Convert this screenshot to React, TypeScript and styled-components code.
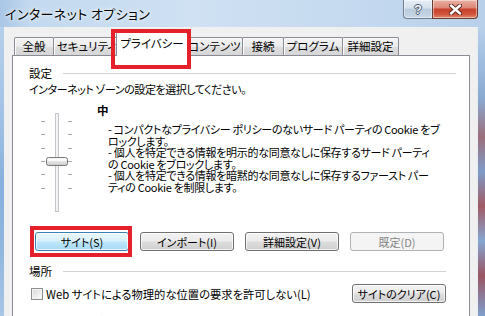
import React from "react";
import styled, { createGlobalStyle } from "styled-components";

const Global = createGlobalStyle`
  html, body { margin: 0; padding: 0; background: #ffffff; }
  body { font-family: "Noto Sans CJK JP", "Noto Sans", sans-serif; }
  #root { width: 485px; height: 316px; }
`;

const RED = "#e4202a";

const Window = styled.div`
  width: 485px;
  height: 316px;
  overflow: hidden;
  display: flex;
  flex-direction: column;
  font-family: "Noto Sans CJK JP", "Noto Sans", sans-serif;
  font-feature-settings: "palt" 1;
  font-size: 11px;
  color: #000;
`;

const TitleBar = styled.div`
  height: 27px;
  flex: none;
  display: flex;
  justify-content: space-between;
  align-items: flex-start;
  background: linear-gradient(90deg, #a9c6e6 0%, #c3d9ef 6%, #cfe1f3 40%, #c4d9ef 75%, #b8d0ea 100%);
`;

const Title = styled.div`
  padding: 5px 0 0 5px;
  font-size: 13px;
  line-height: 17px;
  letter-spacing: 0.4px;
  text-shadow: 0 0 5px rgba(255, 255, 255, 0.95), 0 0 2px rgba(255, 255, 255, 0.9);
`;

const CaptionButtons = styled.div`
  display: flex;
  margin-right: 7px;
`;

const CaptionButton = styled.div<{ $kind: "help" | "close" }>`
  box-sizing: border-box;
  height: 19px;
  width: ${(p) => (p.$kind === "help" ? 29 : 46)}px;
  display: flex;
  align-items: center;
  justify-content: center;
  border: 1px solid ${(p) => (p.$kind === "help" ? "#6f7f91" : "#6a3a34")};
  border-top: none;
  ${(p) => (p.$kind === "help" ? "border-right: none;" : "")}
  border-radius: ${(p) => (p.$kind === "help" ? "0 0 0 4px" : "0 0 4px 0")};
  background: ${(p) =>
    p.$kind === "help"
      ? "linear-gradient(180deg, #e6eef6 0%, #d5e1ec 45%, #b9cbdd 52%, #c9d8e7 100%)"
      : "linear-gradient(180deg, #eab1a5 0%, #de8a78 42%, #c8412c 52%, #cf533a 78%, #e08a6c 100%)"};
  box-shadow: inset 0 0 0 1px rgba(255, 255, 255, 0.45);
`;

const HelpGlyph = styled.span`
  font-family: "Liberation Sans", Arial, sans-serif;
  font-weight: bold;
  font-size: 13px;
  line-height: 13px;
  color: #eef3f8;
  text-shadow: 1px 0 0 #4b5a6a, -1px 0 0 #4b5a6a, 0 1px 0 #4b5a6a, 0 -1px 0 #4b5a6a;
`;

const Body = styled.div`
  flex: 1;
  min-height: 0;
  display: flex;
`;

const SideFrame = styled.div<{ $w: number; $right?: boolean }>`
  flex: none;
  width: ${(p) => p.$w}px;
  background: ${(p) =>
    p.$right
      ? "linear-gradient(180deg, #b9d0ea 0%, #9fbde0 12%, #8aa9d0 25%, #9c6f7c 38%, #7f9cc8 50%, #a15a64 62%, #86a6d1 74%, #9a5563 86%, #7f9fcc 100%)"
      : "linear-gradient(180deg, #b6cfea 0%, #a2c2e6 30%, #86b0dd 55%, #93b8e0 80%, #a9c6e6 100%)"};
  ${(p) => (p.$right ? "border-left: 1px solid #e8edf2;" : "")}
  box-sizing: border-box;
`;

const Client = styled.div`
  flex: 1;
  min-width: 0;
  background: #f0f0f0;
  padding-top: 5px;
  display: flex;
  flex-direction: column;
`;

const TabStrip = styled.div`
  position: relative;
  z-index: 2;
  display: flex;
  align-items: flex-end;
  height: 24px;
  margin: 0 0 -1px 10px;
`;

const Tab = styled.div<{ $w: number; $ml?: number; $selected?: boolean }>`
  position: relative;
  box-sizing: border-box;
  width: ${(p) => p.$w}px;
  margin-left: ${(p) => p.$ml ?? 0}px;
  height: ${(p) => (p.$selected ? 24 : 18)}px;
  margin-bottom: ${(p) => (p.$selected ? 0 : 1)}px;
  border: 1px solid #898c95;
  border-bottom: none;
  border-radius: 2px 2px 0 0;
  background: ${(p) =>
    p.$selected ? "#ffffff" : "linear-gradient(180deg, #f3f3f3 0%, #ebebeb 50%, #dedede 51%, #d6d6d6 100%)"};
  box-shadow: ${(p) => (p.$selected ? "none" : "inset 1px 1px 0 #fbfbfb")};
  z-index: ${(p) => (p.$selected ? 1 : 0)};
  overflow: hidden;
  white-space: nowrap;
  text-align: center;
  font-size: 11.5px;
  line-height: ${(p) => (p.$selected ? 20 : 17)}px;
  ${(p) =>
    p.$selected
      ? `overflow: visible;
  &::after {
    content: "";
    position: absolute;
    left: -6px;
    right: -4px;
    top: -4px;
    bottom: -13px;
    border: 4px solid ${RED};
    pointer-events: none;
  }`
      : ""}
`;

const Panel = styled.div`
  flex: 1;
  min-height: 0;
  width: 458px;
  box-sizing: border-box;
  margin-left: 8px;
  border: 1px solid #898c95;
  border-bottom: none;
  background: #ffffff;
  padding: 10px 13px 0 16px;
  display: flex;
  flex-direction: column;
  overflow: hidden;
`;

const GroupHeader = styled.div<{ $mt?: number; $mr?: number }>`
  display: flex;
  align-items: center;
  height: 14px;
  line-height: 14px;
  margin-top: ${(p) => p.$mt ?? 0}px;
  margin-right: ${(p) => p.$mr ?? 0}px;
  white-space: nowrap;
  font-size: 11.5px;
`;

const GroupLabel = styled.span`
  flex: none;
  min-width: 34px;
  padding-right: 8px;
  box-sizing: border-box;
`;

const GroupLine = styled.div`
  flex: 1;
  height: 1px;
  background: #cfd3d8;
`;

const Instruction = styled.div`
  margin-top: 2px;
  line-height: 14px;
  letter-spacing: -0.45px;
  white-space: nowrap;
`;

const SliderSection = styled.div`
  display: flex;
  margin-top: 7px;
  height: 112px;
`;

const SliderDrawing = styled.svg`
  flex: none;
  margin-left: 9px;
`;

const LevelColumn = styled.div`
  margin-left: 21px;
  display: flex;
  flex-direction: column;
`;

const LevelName = styled.div`
  font-weight: bold;
  font-size: 11.5px;
  line-height: 14px;
`;

const LevelText = styled.div`
  margin: 7px 0 0 11px;
  line-height: 11.6px;
  letter-spacing: -0.3px;
`;

const Line = styled.div`
  white-space: nowrap;
`;

const ButtonRow = styled.div`
  display: flex;
  gap: 11px;
  margin: 17px 0 0 6px;
`;

const Highlight = styled.div`
  position: relative;
  display: flex;
  &::after {
    content: "";
    position: absolute;
    left: -5px;
    right: -3px;
    top: -6px;
    bottom: -6px;
    border: 4px solid ${RED};
    pointer-events: none;
  }
`;

const Button = styled.button<{ $variant?: "default" | "disabled" }>`
  width: 94px;
  height: 19px;
  box-sizing: border-box;
  padding: 0;
  margin: 0;
  border-radius: 3px;
  font-family: inherit;
  font-feature-settings: "palt" 1;
  font-size: 11px;
  line-height: 16px;
  white-space: nowrap;
  border: 1px solid ${(p) => (p.$variant === "default" ? "#3c7fb1" : p.$variant === "disabled" ? "#adb2b5" : "#707070")};
  color: ${(p) => (p.$variant === "disabled" ? "#838383" : "#000")};
  background: ${(p) =>
    p.$variant === "default"
      ? "linear-gradient(180deg, #eaf6fd 0%, #d9f0fc 48%, #bee6fd 52%, #a7d9f5 100%)"
      : p.$variant === "disabled"
      ? "#f4f4f4"
      : "linear-gradient(180deg, #f2f2f2 0%, #ebebeb 48%, #dddddd 52%, #cfcfcf 100%)"};
  box-shadow: inset 0 0 0 1px ${(p) => (p.$variant === "disabled" ? "#f4f4f4" : "rgba(255,255,255,0.75)")};
`;

const CheckRow = styled.div`
  display: flex;
  align-items: center;
  justify-content: space-between;
  margin: 6px 10px 0 2px;
  height: 19px;
`;

const CheckLabel = styled.label`
  display: flex;
  align-items: center;
  white-space: nowrap;
  line-height: 14px;
  font-size: 11.3px;
`;

const CheckBox = styled.span`
  width: 12px;
  height: 12px;
  box-sizing: border-box;
  border: 1px solid #8e8f8f;
  background: linear-gradient(135deg, #d6d6d6 0%, #eeeeee 60%, #fdfdfd 100%);
  box-shadow: inset 0 0 0 1px #f4f4f4;
  margin-right: 3px;
  flex: none;
`;

const tickYs = [18, 31, 45, 58, 71, 85];

function Slider() {
  return (
    <SliderDrawing width={38} height={112} viewBox="0 0 38 112">
      <defs>
        <linearGradient id="thumb" x1="0" y1="0" x2="0" y2="1">
          <stop offset="0" stopColor="#fbfbfb" />
          <stop offset="0.5" stopColor="#e6e6e6" />
          <stop offset="1" stopColor="#c9c9c9" />
        </linearGradient>
      </defs>
      <rect x={17.5} y={10.5} width={3} height={98} fill="#f3f3f3" stroke="#c2c6cc" />
      {tickYs.map((y) => (
        <g key={y}>
          <rect x={3} y={y} width={4} height={1} fill="#a8a8a8" />
          <rect x={30} y={y} width={4} height={1} fill="#a8a8a8" />
        </g>
      ))}
      <rect x={8.5} y={54.5} width={21} height={8} rx={2} fill="url(#thumb)" stroke="#7a7a7a" />
      <rect x={10} y={56} width={18} height={2} fill="#ffffff" opacity={0.7} />
    </SliderDrawing>
  );
}

export default function App() {
  return (
    <>
      <Global />
      <Window>
        <TitleBar>
          <Title>インターネット オプション</Title>
          <CaptionButtons>
            <CaptionButton $kind="help">
              <HelpGlyph>?</HelpGlyph>
            </CaptionButton>
            <CaptionButton $kind="close">
              <svg width="13" height="11" viewBox="0 0 13 11">
                <path d="M2 1.5 L11 9.5 M11 1.5 L2 9.5" stroke="#5b2a22" strokeWidth="4.4" strokeLinecap="round" />
                <path d="M2 1.5 L11 9.5 M11 1.5 L2 9.5" stroke="#ffffff" strokeWidth="2.4" strokeLinecap="round" />
              </svg>
            </CaptionButton>
          </CaptionButtons>
        </TitleBar>
        <Body>
          <SideFrame $w={4} />
          <Client>
            <TabStrip>
              <Tab $w={40}>全般</Tab>
              <Tab $w={67} $ml={-1}>セキュリティ</Tab>
              <Tab $w={72} $ml={-4} $selected>プライバシー</Tab>
              <Tab $w={57} $ml={-2}>コンテンツ</Tab>
              <Tab $w={42} $ml={-1}>接続</Tab>
              <Tab $w={60} $ml={-1}>プログラム</Tab>
              <Tab $w={57} $ml={-1}>詳細設定</Tab>
            </TabStrip>
            <Panel>
              <GroupHeader>
                <GroupLabel>設定</GroupLabel>
                <GroupLine />
              </GroupHeader>
              <Instruction>インターネット ゾーンの設定を選択してください。</Instruction>
              <SliderSection>
                <Slider />
                <LevelColumn>
                  <LevelName>中</LevelName>
                  <LevelText>
                    <Line>- コンパクトなプライバシー ポリシーのないサード パーティの Cookie をブ</Line>
                    <Line>ロックします。</Line>
                    <Line>- 個人を特定できる情報を明示的な同意なしに保存するサード パーティ</Line>
                    <Line>の Cookie をブロックします。</Line>
                    <Line>- 個人を特定できる情報を暗黙的な同意なしに保存するファースト パー</Line>
                    <Line>ティの Cookie を制限します。</Line>
                  </LevelText>
                </LevelColumn>
              </SliderSection>
              <ButtonRow>
                <Highlight>
                  <Button $variant="default">サイト(S)</Button>
                </Highlight>
                <Button>インポート(I)</Button>
                <Button>詳細設定(V)</Button>
                <Button $variant="disabled">既定(D)</Button>
              </ButtonRow>
              <GroupHeader $mt={13} $mr={10}>
                <GroupLabel>場所</GroupLabel>
                <GroupLine />
              </GroupHeader>
              <CheckRow>
                <CheckLabel>
                  <CheckBox />
                  Web サイトによる物理的な位置の要求を許可しない(L)
                </CheckLabel>
                <Button>サイトのクリア(C)</Button>
              </CheckRow>
              <GroupHeader $mt={11}>
                <GroupLabel>ポップアップ ブロック</GroupLabel>
              </GroupHeader>
            </Panel>
          </Client>
          <SideFrame $w={8} $right />
        </Body>
      </Window>
    </>
  );
}
